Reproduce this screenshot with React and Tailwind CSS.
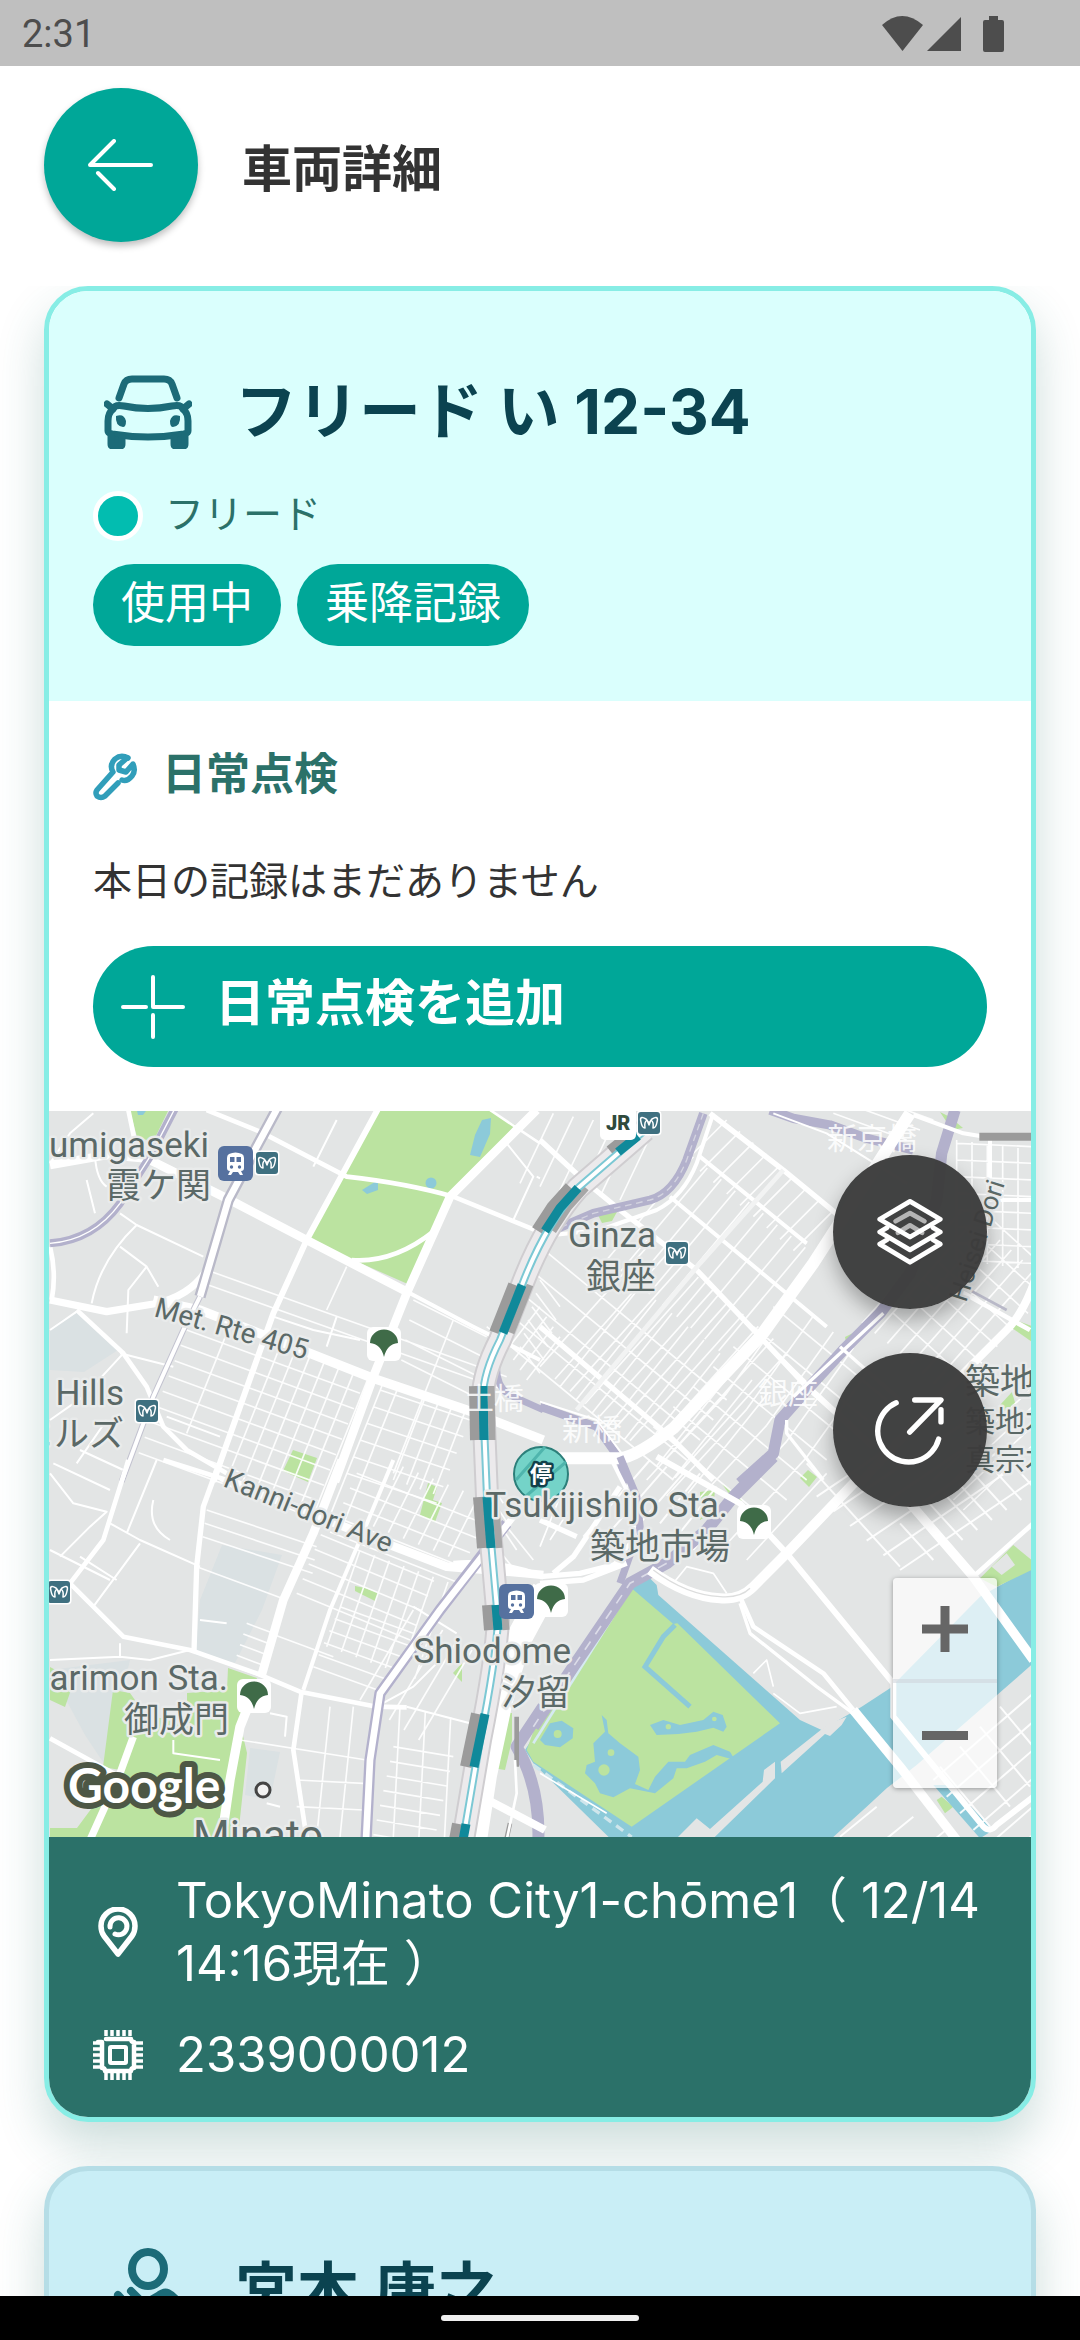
import React from "react";

const uiFont = "font-['Inter','Noto_Sans_CJK_JP',sans-serif]";

/* Evenly spaced parallel street segments: start, end, step and count. */
function hatch([x1, y1, x2, y2, dx, dy, n]) {
  let d = "";
  for (let i = 0; i < n; i++) {
    d += `M${x1 + dx * i} ${y1 + dy * i}L${x2 + dx * i} ${y2 + dy * i}`;
  }
  return d;
}

function Road({ d, w = 12, c = "#fff", ...rest }) {
  return <path d={d} fill="none" stroke={c} strokeWidth={w} strokeLinejoin="round" {...rest} />;
}

function Streets({ sets, w = 5 }) {
  return <Road d={sets.map(hatch).join("")} w={w} opacity="0.9" />;
}

function TrainBadge({ x, y }) {
  return (
    <g transform={`translate(${x} ${y})`}>
      <rect width="35" height="35" rx="6" fill="#56719f" />
      <path d="M11 8Q17.500 5 24 8Q26 9 26 12V22Q26 25 23 25L25 29H22L20 26H15L13 29H10L12 25Q9 25 9 22V12Q9 9 11 8Z" fill="#fff" />
      <path d="M12 11H16.500V16H12ZM18.500 11H23V16H18.500Z" fill="#56719f" />
      <circle cx="13.500" cy="21" r="1.700" fill="#56719f" />
      <circle cx="21.500" cy="21" r="1.700" fill="#56719f" />
    </g>
  );
}

function MetroBadge({ x, y }) {
  return (
    <g transform={`translate(${x} ${y})`}>
      <rect x="-1.500" y="-1.500" width="25" height="25" rx="4" fill="#fff" />
      <rect width="22" height="22" rx="3" fill="#3f7080" />
      <path d="M8 7Q1 3 3 10Q4 16 7 16Q6 10 9 8L11 13L13 8Q16 10 15 16Q18 16 19 10Q21 3 14 7L11 11Z" fill="none" stroke="#fff" strokeWidth="1.500" strokeLinejoin="round" />
    </g>
  );
}

function LeafBadge({ x, y }) {
  return (
    <g transform={`translate(${x} ${y})`}>
      <rect x="-17" y="-17" width="34" height="34" rx="6" fill="#fff" />
      <path d="M-14 -1A14 13.500 0 0 1 14 -1Q3 0 0 13Q-3 0 -14 -1Z" fill="#3f6b48" />
    </g>
  );
}

function Label({ x, y, size = 35, children, end = true, rotate = 0 }) {
  return (
    <text
      transform={`translate(${x} ${y}) rotate(${rotate})`}
      textAnchor={end ? "end" : "start"}
      fontSize={size}
      fill="#5b6967"
      stroke="#e9ebeb"
      strokeWidth="5"
      strokeLinejoin="round"
      paintOrder="stroke"
    >
      {children}
    </text>
  );
}

const railSegments = [
  "M638 1136L618 1152",
  "M578 1188L560 1208L545 1231",
  "M522 1285L503 1333",
  "M483 1386L484 1440",
  "M487 1497L491 1548",
  "M496 1605L498 1630",
  "M485 1714L474 1767",
  "M466 1824L463 1840",
];
const rail = "M645 1130L578 1188Q545 1225 522 1285L500 1340Q482 1375 483 1400L487 1497L498 1620Q496 1660 480 1740L463 1840";

function MapCanvas() {
  return (
    <svg
      className="block h-full w-full font-['Roboto','Noto_Sans_CJK_JP',sans-serif]"
      viewBox="49 1111 982 726"
      preserveAspectRatio="xMidYMid slice"
      role="img"
      aria-label="地図"
    >
      <rect x="0" y="1000" width="1100" height="900" fill="#e3e5e5" />

      {/* institutional blocks */}
      <g fill="#dae1e3">
        <path d="M62 1320L78 1312L118 1350L84 1372L50 1370V1330Z" />
        <path d="M222 1545L282 1555L262 1610L235 1663L195 1655L200 1600Z" />
        <path d="M50 1670L130 1660L105 1765L85 1735Z" />
        <path d="M250 1748L280 1752L270 1800L245 1795Z" />
      </g>

      {/* parks */}
      <g fill="#bbe3a0">
        <path d="M376 1111H490L515 1125L452 1197L410 1285L308 1240Z" />
        <path d="M130 1111H168L153 1142L137 1137Z" />
        <path d="M293 1450L317 1458L308 1482L283 1471Z" />
        <path d="M428 1483L437 1487L433 1500L442 1503L435 1522L420 1515Z" />
        <path d="M355 1586L365 1588L378 1593L375 1601L355 1591Z" />
        <path d="M453 1673L462 1663V1682Z" />
        <path d="M113 1690L130 1693L147 1717L187 1720V1693L227 1690L228 1668L257 1678L240 1723L247 1753L238 1837H50V1828L77 1828L120 1770L103 1767Z" />
        <path d="M50 1667L65 1675L72 1687L65 1707L50 1700Z" />
        <path d="M502 1713H512V1740L505 1770L492 1768Z" />
        <path d="M598 1215L618 1210L612 1221L602 1223Z" />
        <path d="M940 1112L950 1117L963 1128L952 1130Z" />
        <path d="M1010 1318L1032 1326V1342L1012 1328Z" />
        <path d="M1000 1405L1012 1392L1016 1406L1002 1412Z" />
        <path d="M845 1337L853 1333L846 1342ZM820 1376L827 1373L822 1382Z" />
        <path d="M800 1478L808 1470L817 1477L809 1487Z" />
        <path d="M722 1484L740 1496L742 1502L730 1495Z" />
        <path d="M700 1492L715 1490L713 1512L700 1520Z" />
      </g>

      {/* bay and canals */}
      <g transform="translate(540 1460) scale(0.333333)">
        <path d="M-20 910L-45 870L270 375L325 350L350 375L355 405L780 780L845 810L965 740L1050 685L1320 410L1480 320V610L1130 915L1040 985L980 1040L870 1140H215Z" fill="#8ccad9" />
        <path d="M275 385L400 492L412 490L720 790L275 1100L-20 905L-40 870L0 760Z" fill="#bbe3a0" />
        <path d="M1320 355L1420 255L1475 300V330L1370 380Z" fill="#bbe3a0" />
        <path d="M1355 320L1400 280L1425 315L1385 345Z" fill="#e3e5e5" />
        <path d="M1205 1010L1240 1040L1215 1060L1190 1020Z" fill="#bbe3a0" />
        <path d="M1180 975H1230L1360 1110L1320 1135Z" fill="#8ccad9" />
        <path d="M405 495L370 530L315 620L450 740" fill="none" stroke="#8ccad9" strokeWidth="15" />
        <g fill="#8ccad9">
          <path d="M0 840L30 790L65 782L100 805L98 835L60 862L15 855Z" />
          <path d="M185 765L200 780L205 820L240 850L295 890L300 930L285 972L325 990L345 950L385 905L435 905L450 885L520 855L570 875L585 900L530 885L495 905L440 925L410 925L400 955L345 1000L270 985L220 1012L180 1000L165 970L135 940L140 915L165 905L160 850L195 815Z" />
          <path d="M330 795L370 780L420 795L490 780L520 755L548 765L560 800L550 815L520 803L470 815L415 822L350 825Z" />
        </g>
        <g fill="#bbe3a0">
          <circle cx="53" cy="822" r="12" />
          <circle cx="213" cy="878" r="10" />
          <circle cx="192" cy="930" r="17" />
          <circle cx="385" cy="800" r="8" />
          <circle cx="523" cy="777" r="7" />
        </g>
        <path d="M722 905L845 808L870 790L920 770L905 795L870 828L855 822L725 940Z" fill="#e3e5e5" />
        <path d="M410 1135L470 1075L510 1107L668 965L672 930L705 905V955L515 1140Z" fill="#e3e5e5" />
        <path d="M-20 915L275 1131" stroke="#cfe6ec" strokeWidth="10" strokeDasharray="26 18" fill="none" />
        <path d="M275 380L-20 850" stroke="#d6eaf2" strokeWidth="8" fill="none" />
      </g>
      <g fill="#8ccad9">
        <path d="M482 1120L491 1118L490 1134L480 1157L470 1155L475 1135Z" />
        <path d="M362 1190L378 1180L378 1190L367 1194Z" />
        <circle cx="431" cy="1183" r="5.500" />
        <path d="M137 1111H146L143 1115H138Z" />
      </g>

      {/* north-west quarter */}
      <g transform="translate(40 1100) scale(0.333333)">
        <Streets
          sets={[
            [500, 510, 1400, 830, -14, 38, 2],
            [440, 690, 960, 880, -18, 46, 9],
            [1020, 870, 1290, 960, -20, 50, 6],
            [720, 740, 560, 1140, 44, 16, 9],
            [560, 700, 440, 1000, -52, -18, 1],
            [1160, 880, 1060, 1140, 40, 14, 4],
            [920, 500, 860, 630, 0, 0, 1],
            [1240, 660, 1060, 1120, 0, 0, 1],
            [1120, 600, 1340, 710, -12, 60, 4],
            [1440, 740, 1500, 820, 12, -40, 6],
            [1500, 620, 1400, 750, 20, 30, 4],
          ]}
        />
        <Road w={6} d="M240 340L290 375L490 470M290 375Q180 480 155 610M240 440L320 500L355 560M320 500L265 570L260 700M30 190L90 100L160 40M165 170Q170 240 200 260M140 240L165 340M890 60L820 200M30 690L110 635M250 760L130 890L30 960M240 760L400 800M1400 130L1480 230L1420 360M1490 230L1500 235M380 950L540 1010M120 1050L250 1110M200 960L110 1090M700 650L820 690L960 720M890 650L860 740" />
        <Road w={14} d="M110 630L250 760L320 860L370 980L440 1050L560 1120" />
        <Road w={14} d="M500 30L660 95L920 230Q1100 250 1240 290L1510 400" />
        <Road w={14} d="M1180 395Q1060 490 935 480M265 30L290 150M30 440Q50 520 35 600" />
        <Road w={8} d="M930 480L1100 575M1350 30L1500 130" />
        <Road w={18} d="M1015 25L800 420L700 640L600 920L520 1145" />
        <Road w={26} d="M30 195L200 165L320 175L570 300L800 420L1110 580" />
        <Road w={12} d="M1110 580L1300 680L1500 780" />
        <Road w={26} d="M1490 30L1230 290L1100 580L1000 830L885 1145" />
        <Road w={22} d="M30 600L200 635L340 612Q450 590 500 510" />
        <Road w={28} d="M340 600L480 630L1000 835L1280 930L1510 1020" />
        <Road w={24} c="#b3b1cc" d="M405 25L330 170L240 310Q160 420 30 430" />
        <Road w={4} d="M405 25L330 170L240 310Q160 420 30 430" />
        <Road w={34} c="#b9b9c8" d="M712 25L650 140L565 300L480 590" />
        <Road w={20} d="M712 25L650 140L565 300L480 590" />
        <Road w={18} c="#c3c3d0" d="M480 590L430 690L340 890L245 1145" />
        <Road w={12} d="M480 590L430 690L340 890L245 1145" />
        <Road w={20} c="#b3b1cc" d="M1370 800Q1370 870 1420 890L1510 930" />
      </g>

      {/* north-east quarter */}
      <g transform="translate(540 1100) scale(0.333333)">
        <Streets
          sets={[
            [90, 330, -40, 480, 0, 0, 1],
            [460, 170, 200, 480, 42, 34, 9],
            [340, 420, 0, 800, 45, 37, 10],
            [560, 60, 440, 180, 40, 34, 9],
            [300, 560, 60, 860, 48, 40, 9],
            [0, 440, 560, 900, -40, 60, 5],
            [390, 290, 860, 680, 0, 0, 1],
            [480, 170, 800, 430, 0, 0, 1],
            [700, 620, 1040, 900, -60, 60, 7],
            [760, 600, 560, 880, 60, 48, 5],
            [560, 880, 320, 1140, 60, 48, 6],
            [1060, 640, 1280, 840, 46, -50, 7],
            [1380, 420, 1080, 760, 34, 30, 4],
            [1380, 420, 1080, 760, -38, -30, 4],
            [1250, 130, 1480, 140, 0, 50, 8],
            [1250, 120, 1250, 480, 46, 6, 5],
            [40, 40, -60, 250, 60, 10, 6],
            [880, 40, 1100, 120, 40, -30, 3],
            [1180, 1140, 1480, 860, 30, 30, 4],
          ]}
        />
        <Road w={10} d="M0 120L130 240L240 330L470 510L660 710L830 880L960 1000" />
        <Road w={16} d="M510 40L730 210L900 350M0 120L130 240L240 330L470 510L660 710M0 680L200 850L390 1010L520 1140M660 710L800 860L1000 1040" />
        <Road w={12} d="M390 290L860 680M480 170L800 430" />
        <Road w={14} c="#f2f3f3" d="M730 210L480 490L110 930" />
        <Road w={26} c="#b3b1cc" d="M490 40L440 180Q400 280 330 300L160 340L20 400" />
        <Road w={4} c="#d4d4e0" strokeDasharray="20 14" d="M490 40L440 180Q400 280 330 300L160 340L20 400" />
        <Road w={12} d="M520 40L470 190Q430 290 350 330L180 390L-10 410" />
        <Road w={28} c="#b3b1cc" d="M690 30L760 55L870 75L980 115L1120 150" />
        <Road w={34} c="#b3b1cc" d="M1245 30L1205 160L1190 300L1110 520L1020 640L910 750L800 870L720 960L700 1060L600 1150" />
        <Road w={10} d="M1030 640L760 890M740 960L740 1000L850 1140M900 740L1080 900" />
        <Road w={24} c="#b3b1cc" d="M0 920L170 980L240 1080L260 1150" />
        <Road w={6} d="M0 905L170 960L260 1080M700 40L860 100L1100 250" />
        <Road w={36} d="M0 1075H240Q290 1070 400 985L660 710L820 490L1110 40" />
        <Road w={12} d="M1120 45L1270 100L1320 108M1350 120V300L1480 300" />
        <Road w={24} c="#9b9b9b" d="M1318 110L1480 110" />
        <Road w={24} d="M1485 540Q1450 640 1400 690L1200 890L960 1150" />
        <Road w={14} d="M1200 540L1470 690" />
        <Road w={8} c="#b9b9c8" d="M1270 560L1400 630" />
      </g>

      {/* south-west quarter */}
      <g transform="translate(40 1460) scale(0.333333)">
        <Streets
          sets={[
            [1090, 20, 1000, 200, 45, 18, 6],
            [950, 40, 1330, 190, -20, 44, 5],
            [860, 180, 1200, 320, -18, 44, 6],
            [960, 270, 860, 560, 44, 16, 7],
            [500, 150, 830, 260, -6, 40, 3],
            [900, 440, 1120, 520, -16, 36, 6],
            [600, 70, 840, 160, 0, 0, 1],
            [470, 320, 740, 420, 0, 0, 1],
            [620, 490, 700, 520, -10, 32, 5],
            [690, 520, 880, 590, 0, 0, 1],
            [1060, 860, 1240, 890, -10, 44, 7],
            [1080, 740, 1060, 1131, 76, 16, 3],
            [940, 740, 900, 1131, -70, 0, 2],
            [600, 840, 980, 900, 0, 0, 1],
            [770, 960, 970, 970, 0, 80, 2],
            [1330, 0, 1370, 60, 20, 70, 4],
            [1120, 450, 960, 720, 44, 30, 5],
            [1400, 200, 1480, 300, -40, 50, 3],
          ]}
        />
        <Road w={6} d="M30 40L100 130L200 155L150 200L60 290M30 270L210 360M210 190L300 240L480 320M300 250L160 440M240 550V590L30 600M240 590L330 600L450 570M40 10L210 90M350 0L260 220M540 60L700 130M1010 740L1120 680L1190 610M1100 740L1290 790M480 480L560 490M120 290L230 360M1120 440L1250 520M690 760L740 770L735 830M400 840V880L540 900M680 1030L720 1040M340 120Q320 200 390 240" />
        <Road w={16} d="M530 30L490 140L470 320L462 575" />
        <Road w={14} d="M265 0L190 240L90 370L250 530L450 570L650 640L780 695L1010 740L1100 742" />
        <Road w={14} d="M370 0L560 60M785 695L760 870L800 1135M30 835L230 945" />
        <Road w={12} d="M1060 0L960 240L870 450L790 690" />
        <Road w={26} d="M905 0L820 220L730 420L665 645" />
        <Road w={28} d="M640 700L600 800L570 960L545 1135" />
        <Road w={22} d="M280 830L240 940L150 1140" />
        <Road w={26} d="M560 60L1050 255L1220 320Q1350 330 1510 345" />
        <Road w={16} d="M1240 310Q1380 300 1510 350" />
        <Road w={34} c="#b3b1cc" d="M1400 190L1200 450L1020 700L990 900L978 1140" />
        <Road w={20} d="M1420 170L1200 450L1020 700L990 900L978 1140" />
        <Road w={36} c="#b3b1cc" d="M1510 740L1430 860Q1500 980 1495 1140" />
        <Road w={14} c="#9b9b9b" d="M1430 770L1430 920M1410 1090L1400 1135" />
        <Road w={8} d="M1425 900L1430 1000L1400 1140" />
      </g>

      {/* south-east quarter */}
      <g transform="translate(540 1460) scale(0.333333)">
        <Streets
          sets={[
            [480, 40, 360, 190, 50, 40, 3],
            [330, 0, 130, 230, 50, 20, 3],
            [800, 10, 1080, 320, 0, 0, 1],
            [1480, 60, 1080, 330, -50, -44, 6],
            [1080, 190, 1180, 300, 44, -30, 8],
            [1480, 700, 1180, 960, 40, 50, 7],
            [1200, 920, 1350, 1100, 60, -60, 4],
            [900, 1130, 1010, 1040, 110, 30, 3],
          ]}
          w={6}
        />
        <Road w={5} d="M30 240L120 100M0 260L80 60M400 370L440 320L520 340L560 400M640 640L680 600L700 680M0 940L200 1060M700 700L780 760L890 740" />
        <Road w={36} c="#b3b1cc" d="M700 -10L580 110L500 210L380 310L270 370L100 620L-20 800" />
        <Road w={5} c="#dcdce8" strokeDasharray="30 26" d="M380 310L270 370L100 620L-20 800" />
        <Road w={22} c="#b3b1cc" d="M240 -10L290 110L300 200L240 370" />
        <Road w={12} d="M210 -10L270 110L285 230L210 330" />
        <Road w={18} d="M350 -10L600 130L740 280L1060 670V770L1330 1100Q1350 1120 1370 1095L1480 1010" />
        <Road w={30} d="M960 50L740 280L640 380Q600 420 540 415Q440 410 330 330" />
        <Road w={4} c="#dcdddd" d="M630 385Q600 415 540 410Q440 405 340 330" />
        <Road w={16} d="M0 350L120 340L240 310M0 370L130 360L260 310M0 180L110 230M240 80L100 290L40 340" />
        <Road w={14} d="M600 410L640 500L850 640L940 750" />
        <Road w={10} d="M600 430L630 520L830 680L940 760" />
        <Road w={28} d="M940 750L1080 920L1250 1140" />
        <Road w={28} d="M1110 130L1300 350L1480 600" />
        <Road w={14} d="M1300 350L1480 190" />
      </g>

      {/* trunk road beside the railway and the railway */}
      <Road w={26} d="M545 1590L518 1640L500 1700L484 1775L474 1840" />
      <Road w={8} d="M484 1798L545 1830" />
      <Road w={24} c="#cfcdd0" d={rail} />
      <Road w={20} c="#eceaec" d={rail} />
      <g transform="translate(-7 0)">
        {railSegments.map((d) => <Road key={d} w={14} c="#9b9b9b" d={d} />)}
      </g>
      <g transform="translate(8 0)">
        {railSegments.slice(1, 6).map((d) => <Road key={d} w={7} c="#a6a6a6" d={d} />)}
      </g>
      <Road w={8} c="#7cc8d4" d={rail} />
      <Road w={4} d={rail} />
      {railSegments.map((d) => <Road key={d} w={9} c="#10899a" d={d} />)}

      {/* faint area names */}
      <g fill="#fff" fontSize="30" opacity="0.85">
        <text x="464" y="1409">土橋</text>
        <text x="562" y="1440">新橋</text>
        <text x="758" y="1404">銀座</text>
        <text x="827" y="1149">新京橋</text>
      </g>

      {/* place names */}
      <Label x={209} y={1157}>umigaseki</Label>
      <Label x={211} y={1198}>霞ケ関</Label>
      <Label x={153} y={1316} size={28} end={false} rotate={16}>Met. Rte 405</Label>
      <Label x={124} y={1405}>Hills</Label>
      <Label x={124} y={1446}>ヒルズ</Label>
      <Label x={656} y={1247}>Ginza</Label>
      <Label x={656} y={1289}>銀座</Label>
      <Label x={222} y={1486} size={28} end={false} rotate={22}>Kanni-dori Ave</Label>
      <Label x={571} y={1663}>Shiodome</Label>
      <Label x={571} y={1705}>汐留</Label>
      <Label x={228} y={1690}>arimon Sta.</Label>
      <Label x={229} y={1732}>御成門</Label>
      <Label x={193} y={1850} size={42} end={false}>Minato</Label>
      <Label x={966} y={1303} size={26} end={false} rotate={-72}>Heisei Dori</Label>
      <Label x={965} y={1394} end={false}>築地</Label>
      <Label x={965} y={1432} size={30} end={false}>築地本</Label>
      <Label x={965} y={1470} size={30} end={false}>真宗本</Label>

      <TrainBadge x={218} y={1146} />
      <TrainBadge x={499} y={1584} />
      <MetroBadge x={256} y={1152} />
      <MetroBadge x={136} y={1400} />
      <MetroBadge x={48} y={1581} />
      <MetroBadge x={666} y={1242} />
      <rect x="600" y="1100" width="36" height="40" rx="5" fill="#fff" />
      <text x="606" y="1130" fontSize="20" fontWeight="900" fill="#2f4a3c">JR</text>
      <MetroBadge x={638} y={1112} />
      <LeafBadge x={384} y={1344} />
      <LeafBadge x={754} y={1522} />
      <LeafBadge x={551} y={1600} />
      <LeafBadge x={254} y={1696} />

      {/* vehicle marker */}
      <circle cx="541" cy="1474" r="27" fill="#74d3c8" stroke="#2c7f7a" strokeWidth="2" />
      <path d="M516 1480L545 1447M526 1496L566 1462" stroke="#4fb5ad" strokeWidth="3" />
      <text x="541" y="1482" textAnchor="middle" fontSize="22" fontWeight="700" fill="#fff" stroke="#12404a" strokeWidth="5" paintOrder="stroke" strokeLinejoin="round">停</text>
      <Label x={728} y={1517}>Tsukijishijo Sta.</Label>
      <Label x={730} y={1559}>築地市場</Label>

      <circle cx="263" cy="1790" r="7" fill="#f2f2f2" stroke="#444" strokeWidth="3" />
      <text x="68" y="1803" fontFamily="Lato" fontSize="48" fontWeight="700" fill="#fff" stroke="#4d5745" strokeWidth="12" strokeLinejoin="round" paintOrder="stroke">Google</text>
    </svg>
  );
}

function CarIcon() {
  return (
    <svg width="88" height="74" viewBox="0 0 88 74" fill="none" stroke="#1c6b78" strokeWidth="7" strokeLinecap="round" strokeLinejoin="round" aria-hidden="true">
      <path d="M15 23L20 9Q22 4 28 4H60Q66 4 68 9L73 23" />
      <path d="M3 29L9 34Q11 29 20 31Q44 36 68 31Q77 29 79 34L85 29" />
      <path d="M9 34Q4 38 4 46V56Q4 58 8 59Q44 65 80 59Q84 58 84 56V46Q84 38 79 34" />
      <path d="M7 60V69Q7 71 9 71H16Q18 71 18 69V63M70 63V69Q70 71 72 71H79Q81 71 81 69V60" fill="#1c6b78" />
      <path d="M12 41Q20 38 22 46Q22 52 19 52Q11 51 12 41ZM76 41Q68 38 66 46Q66 52 69 52Q77 51 76 41Z" fill="#1c6b78" stroke="none" />
    </svg>
  );
}

function WrenchIcon() {
  return (
    <svg width="45" height="48" viewBox="0 0 45 48" fill="none" stroke="#319eba" strokeWidth="5.500" strokeLinecap="round" strokeLinejoin="round" aria-hidden="true">
      <path d="M35 5Q28 1 22 6Q16 12 20 19L4 37Q2 40 4 43Q8 46 12 43L25 30" />
      <path d="M29 27Q34 29 39 23Q43 18 40 11L33 19L26 17L26 12L34 5" />
    </svg>
  );
}

function PinIcon() {
  return (
    <svg width="50" height="50" viewBox="0 0 50 50" fill="none" stroke="#fff" strokeWidth="5.500" strokeLinecap="round" strokeLinejoin="round" aria-hidden="true">
      <path d="M25 47L11 29Q8 25 8 19A17 17 0 0 1 42 19Q42 25 39 29Z" />
      <path d="M17 20A8.500 8.500 0 1 1 22 27" strokeWidth="5" />
    </svg>
  );
}

function ChipIcon() {
  return (
    <svg width="50" height="50" viewBox="0 0 50 50" fill="none" stroke="#fff" strokeLinecap="round" strokeLinejoin="round" aria-hidden="true">
      <path strokeWidth="4.500" d="M13 9H38Q38 12 41 12V38Q38 38 38 41H12Q12 38 9 38V12H5" />
      <rect strokeWidth="4" x="17" y="17" width="16" height="16" rx="1" />
      <path strokeWidth="3.500" strokeLinecap="butt" d="M13 0V6M19 0V6M25 0V6M31 0V6M37 0V6M13 42V50M19 42V50M25 42V50M31 42V50M37 42V50M0 19H8M0 25H8M0 31H8M0 37H8M42 13H50M42 19H50M42 25H50M42 31H50M42 37H50M0 13H8" />
    </svg>
  );
}

function PersonIcon() {
  return (
    <svg width="88" height="88" viewBox="0 0 88 88" fill="none" stroke="#1c6b78" strokeWidth="8" strokeLinecap="round" strokeLinejoin="round" aria-hidden="true">
      <ellipse cx="44" cy="21" rx="16" ry="17" />
      <path d="M14 47L26 60M27 43L40 56L54 48Q60 43 64 45Q74 50 76 62V84M14 58V84" />
    </svg>
  );
}

function LayersIcon() {
  return (
    <svg width="66" height="66" viewBox="0 0 196 196" fill="none" stroke="#fff" strokeWidth="14" strokeLinecap="round" strokeLinejoin="round" aria-hidden="true">
      <path stroke="#b5b5b5" d="M55 66L98 42L141 66M62 100L98 78L134 100" />
      <path d="M98 7L188 60L98 113L8 60Z" />
      <path d="M30 85L8 98L98 151L188 98L166 85M30 121L8 134L98 188L188 134L166 121" />
    </svg>
  );
}

function OpenIcon() {
  return (
    <svg className="overflow-visible" width="66" height="66" viewBox="0 0 196 196" fill="none" stroke="#fff" strokeWidth="16" strokeLinecap="round" strokeLinejoin="round" aria-hidden="true">
      <path d="M57 17A92 92 0 1 0 183 125" />
      <path d="M97 104L190 9H112M190 38V74" />
    </svg>
  );
}

const roundButton = "flex size-[154px] items-center justify-center rounded-full";

function StatusBar() {
  return (
    <div className="flex h-[66px] shrink-0 items-center justify-between bg-[#bfbfbf] pt-0.5 pr-[76px] pl-[22px] font-['Roboto',sans-serif] text-[38px] text-[#4d4d4d]">
      <span>2:31</span>
      <svg width="122" height="38" viewBox="0 0 122 38" fill="currentColor" aria-hidden="true">
        <path d="M0 10Q20 -8 41 10L20.500 36Z" />
        <path d="M45 36L79 2V36Z" />
        <path d="M107 1H116V5H120Q122 5 122 7V35Q122 37 120 37H103Q101 37 101 35V7Q101 5 103 5H107Z" />
      </svg>
    </div>
  );
}

function VehicleCard() {
  return (
    <section className="overflow-hidden rounded-[44px] border-[5px] border-[#87ede5] bg-white shadow-[0_24px_48px_rgba(43,113,105,0.24)]">
      <div className="bg-[#dafffd] px-11 pt-[77px] pb-[55px]">
        <div className="flex h-[88px] items-center gap-8">
          <span className="flex w-[110px] shrink-0 justify-center"><CarIcon /></span>
          <h2 className="text-[62px] leading-[88px] font-bold text-[#0b4350]">フリード い 12-34</h2>
        </div>
        <div className="mt-[35px] flex h-[50px] items-center gap-[22px]">
          <span className="size-[50px] rounded-full border-[5px] border-white bg-[#02bdb0]" />
          <span className="pb-1 text-[39px] leading-[46px] text-[#2b7169]">フリード</span>
        </div>
        <div className="mt-[23px] flex gap-4">
          <button type="button" className="h-[82px] rounded-full bg-[#00a798] px-7 pb-1 text-[44px] leading-[78px] text-white">使用中</button>
          <button type="button" className="h-[82px] rounded-full bg-[#00a798] px-7 pb-1 text-[44px] leading-[78px] text-white">乗降記録</button>
        </div>
      </div>
      <div className="px-11 py-11">
        <div className="flex h-16 items-center gap-6">
          <WrenchIcon />
          <h3 className="pb-1.5 text-[44px] leading-[58px] font-bold text-[#2b7169]">日常点検</h3>
        </div>
        <p className="mt-10 text-[39px] leading-[64px] text-[#333333]">本日の記録はまだありません</p>
        <button type="button" className="mt-[33px] flex h-[121px] w-full items-center gap-[30px] rounded-full bg-[#00a798] px-7 text-[50px] font-bold text-white">
          <svg width="64" height="64" viewBox="0 0 64 64" fill="none" stroke="#fff" strokeWidth="4" strokeLinecap="round" strokeLinejoin="round" aria-hidden="true">
            <path d="M32 2V32H62M2 32H25M32 40V62" />
          </svg>
          <span className="pb-2 leading-[72px]">日常点検を追加</span>
        </button>
      </div>
      <div className="relative h-[726px] overflow-hidden">
        <MapCanvas />
        <div className="absolute top-11 right-11 flex flex-col gap-11">
          <button type="button" aria-label="地図の種類" className={`${roundButton} bg-[#3c3c3c]/97 shadow-[0_10px_20px_rgba(0,0,0,0.3)]`}><LayersIcon /></button>
          <button type="button" aria-label="外部で開く" className={`${roundButton} bg-[#3c3c3c]/97 shadow-[0_10px_20px_rgba(0,0,0,0.3)]`}><OpenIcon /></button>
        </div>
        <div className="absolute right-[34px] bottom-[49px] flex w-[104px] flex-col divide-y-4 divide-gray-300/60 rounded bg-white/70 shadow-[0_1px_5px_rgba(0,0,0,0.35)]">
          <button type="button" aria-label="拡大" className="flex h-[105px] items-center justify-center">
            <svg width="46" height="46" viewBox="0 0 46 46" fill="#666" aria-hidden="true"><path d="M0 18.500H18.500V0H27.500V18.500H46V27.500H27.500V46H18.500V27.500H0Z" /></svg>
          </button>
          <button type="button" aria-label="縮小" className="flex h-[105px] items-center justify-center">
            <svg width="46" height="9" viewBox="0 0 46 9" fill="#666" aria-hidden="true"><path d="M0 0H46V9H0Z" /></svg>
          </button>
        </div>
      </div>
      <div className="flex flex-col gap-7 bg-[#2b7169] px-11 pt-8 pb-[31px] text-[49px] leading-[63px] text-white">
        <div className="flex items-center gap-[33px]">
          <span className="shrink-0"><PinIcon /></span>
          <p>TokyoMinato City1-chōme1（ 12/14 14:16現在 ）</p>
        </div>
        <div className="flex items-center gap-[33px]">
          <span className="shrink-0"><ChipIcon /></span>
          <p>2339000012</p>
        </div>
      </div>
    </section>
  );
}

export default function App() {
  return (
    <div className={`flex h-screen flex-col overflow-hidden bg-white ${uiFont}`} lang="ja">
      <StatusBar />
      <header className="flex h-[220px] shrink-0 items-start gap-11 px-11 pt-[22px]">
        <button type="button" aria-label="戻る" className={`${roundButton} bg-[#00a798] shadow-[0_4px_7px_rgba(0,0,0,0.25)]`}>
          <svg width="66" height="52" viewBox="0 0 66 52" fill="none" stroke="#fff" strokeWidth="4" strokeLinecap="round" strokeLinejoin="round" aria-hidden="true">
            <path d="M63 26H2L26 2M10 34L26 50" />
          </svg>
        </button>
        <h1 className="text-[50px] leading-[162px] font-bold text-[#333333]">車両詳細</h1>
      </header>
      <main className="flex flex-1 flex-col gap-11 overflow-hidden px-11">
        <div className="shrink-0"><VehicleCard /></div>
        <section className="shrink-0 rounded-[44px] border-[5px] border-[#b5dde6] bg-[#c9eef6] px-11 pt-[77px] pb-11 shadow-[0_24px_48px_rgba(43,113,105,0.24)]">
          <div className="flex h-[88px] items-center gap-8">
            <span className="flex w-[110px] shrink-0 justify-center"><PersonIcon /></span>
            <h2 className="text-[62px] leading-[88px] font-bold text-[#0b4350]">宮本 康之</h2>
          </div>
        </section>
      </main>
      <footer className="flex h-11 shrink-0 items-center justify-center bg-black">
        <span className="h-1.5 w-[198px] rounded-full bg-[#eeeeee]" />
      </footer>
    </div>
  );
}
